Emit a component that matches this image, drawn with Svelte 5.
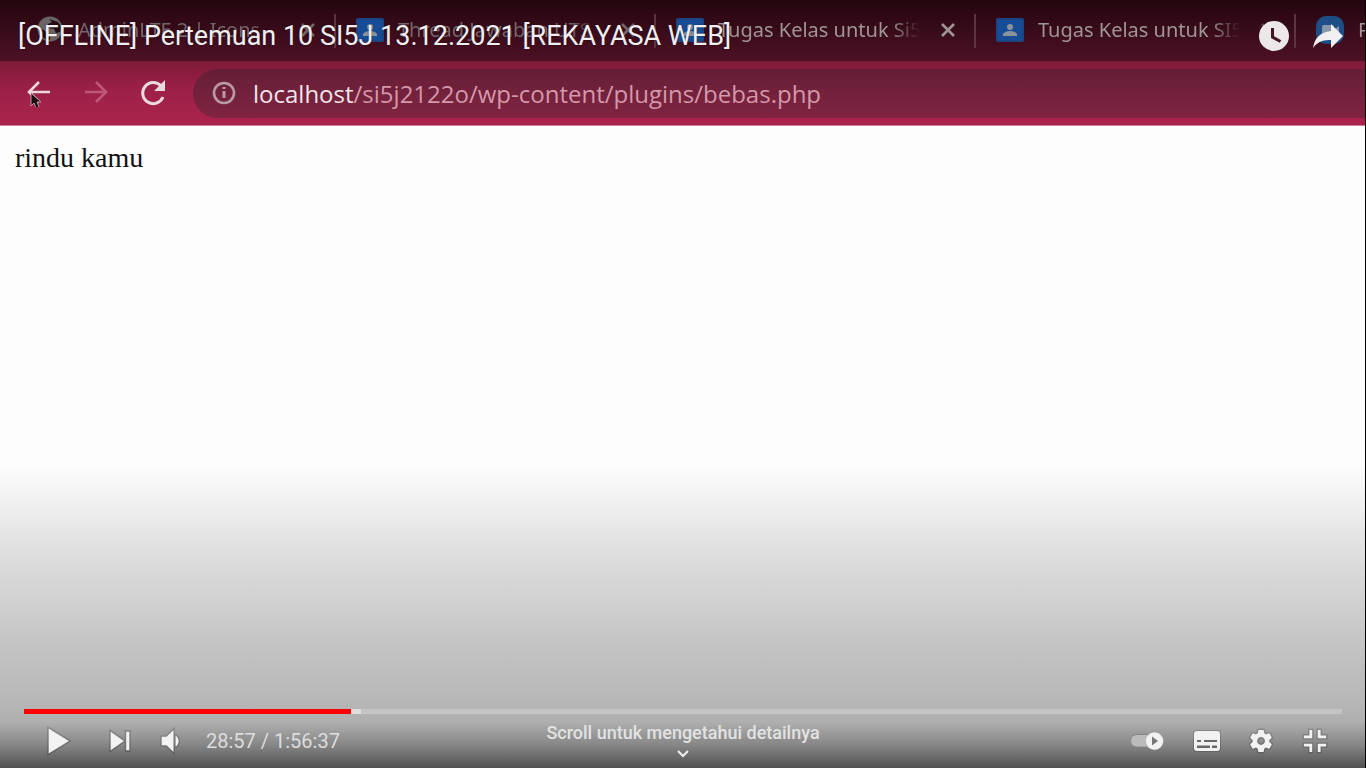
<script>
  const tabs = [
    { title: 'AdminLTE 2 | Icons', icon: 'globe', dim: true },
    { title: 'Thread Jawaban UTS |', icon: 'class', dim: true },
    { title: 'Tugas Kelas untuk Si5', icon: 'class', dim: false },
    { title: 'Tugas Kelas untuk SI5', icon: 'class', dim: false, faintClose: true },
    { title: 'P', icon: 'meet', dim: false }
  ];
  const played = 24.8;
  const loaded = 25.6;
</script>

<main class="player">
  <section class="video" aria-label="Video">
    <div class="tabs">
      {#each tabs as tab}
        <div class="tab" class:dim={tab.dim}>
          <svg class="favicon" width="28" height="28" viewBox="0 0 28 28" aria-hidden="true">
            {#if tab.icon === 'globe'}
              <circle cx="14" cy="13" r="12.5" fill="#6b6466" />
              <path d="M3 13q6 0 7 4l4 2v5Q4 23 3 13zM13 3l9 3q4 5 2 10l-4 1-2-4-6-1v-4l4-2z" fill="#240c13" />
            {:else if tab.icon === 'class'}
              <rect y="2" width="28" height="24" rx="2" fill="#1c4583" />
              <rect x="2" y="4" width="24" height="20" fill="#174c96" />
              <circle cx="14" cy="11" r="3" fill="#8c9398" />
              <path d="M7 20v-2q2-3 7-3t7 3v2z" fill="#8c9398" />
            {:else}
              <rect width="28" height="28" rx="10" fill="#1d4f86" />
              <rect x="6" y="9" width="12" height="10" rx="2" fill="#8797a8" />
              <path d="M19 13l4-3v8l-4-3z" fill="#8797a8" />
            {/if}
          </svg>
          <span class="tab-title">{tab.title}</span>
          <svg class="close" class:faint={tab.faintClose} width="16" height="16" viewBox="0 0 16 16" aria-hidden="true">
            <path d="M2 2l12 12M14 2L2 14" stroke="currentColor" stroke-width="2.6" />
          </svg>
        </div>
      {/each}
    </div>
    <div class="toolbar">
      <div class="nav">
        <svg width="28" height="28" viewBox="0 0 28 28" fill="none" stroke="#ead9df" stroke-width="2.6" aria-hidden="true">
          <path d="M25 13H4M14 3L4 13l10 10" />
          <path d="M6 14v13l3-3 2 5 3-1-2-5h4z" fill="#180d12" stroke="#b897a5" stroke-width="1" />
        </svg>
        <svg width="28" height="28" viewBox="0 0 28 28" fill="none" stroke="#bd5878" stroke-width="2.6" aria-hidden="true">
          <path d="M3 13h21M14 3l10 10-10 10" />
        </svg>
        <svg width="28" height="28" viewBox="0 0 28 28" aria-hidden="true">
          <path d="M22 7A10.5 10.5 0 1 0 24 18" fill="none" stroke="#ead9df" stroke-width="3" />
          <path d="M26 1v11H15z" fill="#ead9df" />
        </svg>
      </div>
      <div class="address">
        <svg width="24" height="24" viewBox="0 0 24 24" fill="none" stroke="#b99ba6" aria-hidden="true">
          <circle cx="12" cy="12" r="10" stroke-width="2.6" />
          <path d="M12 10v7M12 6v2" stroke-width="3" />
        </svg>
        <span class="url"><b>localhost</b>/si5j2122o/wp-content/plugins/bebas.php</span>
      </div>
    </div>
    <p class="page">rindu kamu</p>
  </section>

  <div class="overlay">
    <header>
      <h1>[OFFLINE] Pertemuan 10 SI5J 13.12.2021 [REKAYASA WEB]</h1>
      <div class="actions">
        <button aria-label="Tonton nanti">
          <svg width="32" height="32" viewBox="0 0 32 32">
            <circle cx="16" cy="16" r="15" fill="#ece7e9" />
            <path d="M14.5 8v9l8 4.5" fill="none" stroke="#451522" stroke-width="3" />
          </svg>
        </button>
        <button aria-label="Bagikan">
          <svg width="32" height="32" viewBox="0 0 32 32">
            <path d="M19 4l12 12-12 12v-8Q7 19 1 28 3 13 19 11z" fill="#f1eff1" />
          </svg>
        </button>
      </div>
    </header>

    <footer>
      <div class="progress" role="progressbar" aria-label="Posisi video" aria-valuenow={played}>
        <div class="loaded" style="width: {loaded}%"></div>
        <div class="played" style="width: {played}%"></div>
      </div>
      <div class="controls">
        <div class="left">
          <button class="cell" aria-label="Putar">
            <svg class="glyph" width="56" height="56" viewBox="0 0 36 36"><path d="M12 10v16l13-8z" /></svg>
          </button>
          <button class="cell" aria-label="Berikutnya">
            <svg class="glyph" width="56" height="56" viewBox="0 0 36 36"><path d="M12 24l8.500-6L12 12zM22 12v12h2V12z" /></svg>
          </button>
          <button class="cell volume" aria-label="Volume">
            <svg class="glyph" width="50" height="50" viewBox="0 0 36 36"><path d="M12 21h3.500l5 5v-16l-5 5H12zM22 14v8c1.300-.7 2.200-2.200 2.200-4s-.9-3.300-2.200-4z" /></svg>
          </button>
          <span class="time">28:57 / 1:56:37</span>
        </div>
        <button class="details">
          <span>Scroll untuk mengetahui detailnya</span>
          <svg width="14" height="10" viewBox="0 0 14 10" aria-hidden="true"><path d="M2 2l5 5 5-5" fill="none" stroke="#eee" stroke-width="2.200" /></svg>
        </button>
        <div class="right">
          <button class="cell autoplay" aria-label="Putar otomatis">
            <svg width="66" height="54" viewBox="0 0 66 54">
              <rect x="16.500" y="20.500" width="30" height="12.500" rx="6.250" fill="#bbb" stroke="#858585" />
              <circle cx="40.500" cy="27" r="9" fill="#f2f2f2" stroke="#777" stroke-opacity=".3" />
              <path d="M38 22.500v9l6-4.500z" fill="#777" />
            </svg>
          </button>
          <button class="cell" aria-label="Teks">
            <svg width="54" height="54" viewBox="0 0 54 54">
              <rect class="box" x="14" y="17" width="26" height="20" rx="3" />
              <path d="M17 26h4v2h-4zM24 26h13v2H24zM17 31.500h13v2.500H17zM32 31.500h5v2.500h-5z" fill="#686868" />
            </svg>
          </button>
          <button class="cell" aria-label="Setelan">
            <svg class="glyph" width="50" height="50" viewBox="0 0 36 36"><path d="m 23.94,18.78 c .03,-0.25 .05,-0.51 .05,-0.78 0,-0.27 -0.02,-0.52 -0.05,-0.78 l 1.68,-1.32 c .15,-0.12 .19,-0.33 .09,-0.51 l -1.6,-2.76 c -0.09,-0.17 -0.31,-0.24 -0.48,-0.17 l -1.99,.8 c -0.41,-0.32 -0.86,-0.58 -1.35,-0.78 l -0.30,-2.12 c -0.02,-0.19 -0.19,-0.33 -0.39,-0.33 l -3.2,0 c -0.2,0 -0.36,.14 -0.39,.33 l -0.30,2.12 c -0.48,.2 -0.93,.47 -1.35,.78 l -1.99,-0.8 c -0.18,-0.07 -0.39,0 -0.48,.17 l -1.6,2.76 c -0.10,.17 -0.05,.39 .09,.51 l 1.68,1.32 c -0.03,.25 -0.05,.52 -0.05,.78 0,.26 .02,.52 .05,.78 l -1.68,1.32 c -0.15,.12 -0.19,.33 -0.09,.51 l 1.6,2.76 c .09,.17 .31,.24 .48,.17 l 1.99,-0.8 c .41,.32 .86,.58 1.35,.78 l .30,2.12 c .02,.19 .19,.33 .39,.33 l 3.2,0 c .2,0 .36,-0.14 .39,-0.33 l .30,-2.12 c .48,-0.2 .93,-0.47 1.35,-0.78 l 1.99,.8 c .18,.07 .39,0 .48,-0.17 l 1.6,-2.76 c .09,-0.17 .05,-0.39 -0.09,-0.51 l -1.68,-1.32 z m -5.94,2.01 c -1.54,0 -2.8,-1.25 -2.8,-2.8 0,-1.54 1.25,-2.8 2.8,-2.8 1.54,0 2.8,1.25 2.8,2.8 0,1.54 -1.25,2.8 -2.8,2.8 z" /></svg>
          </button>
          <button class="cell" aria-label="Keluar dari layar penuh">
            <svg class="glyph" width="50" height="50" viewBox="0 0 36 36"><path d="M14 14h-4v2h6v-6h-2zM22 14v-4h-2v6h6v-2zM20 26h2v-4h4v-2h-6zM10 22h4v4h2v-6h-6z" /></svg>
          </button>
        </div>
      </div>
    </footer>
  </div>
</main>

<style>
  :global(body) {
    margin: 0;
    background: #000;
  }
  .player {
    position: relative;
    min-height: 100vh;
    overflow: hidden;
    font-family: Roboto, sans-serif;
  }
  .video {
    min-height: 100vh;
    margin-right: 1px;
    background: #fdfdfd;
    overflow: hidden;
  }
  .tabs {
    display: flex;
    height: 61px;
    padding-left: 16px;
    background: linear-gradient(#24060f, #4d1125);
    overflow: hidden;
  }
  .tab {
    display: flex;
    align-items: center;
    flex: 0 0 320px;
    min-width: 0;
    box-sizing: border-box;
    padding: 0 20px 2px;
    color: #9f9595;
    font: 20px "Noto Sans", sans-serif;
    background: linear-gradient(#5c3541, #5c3541) right center / 2px 34px no-repeat;
  }
  .dim {
    color: #74656a;
  }
  .favicon {
    flex: none;
    margin-right: 14px;
  }
  .tab-title {
    flex: 1;
    min-width: 0;
    overflow: hidden;
    white-space: nowrap;
    mask-image: linear-gradient(90deg, #000 85%, transparent);
  }
  .close {
    flex: none;
    margin-left: 20px;
  }
  .faint {
    opacity: 0.4;
  }
  .toolbar {
    display: flex;
    align-items: center;
    gap: 26px;
    height: 64px;
    padding-left: 25px;
    background: linear-gradient(#7f1b39, #9c2047 45%, #ab244d);
    border-bottom: 1px solid #cf819b;
  }
  .nav {
    display: flex;
    gap: 29px;
  }
  .address {
    display: flex;
    align-items: center;
    flex: 1;
    gap: 17px;
    height: 49px;
    padding-left: 19px;
    border-radius: 25px 0 0 25px;
    background: linear-gradient(#651e36, #802442);
  }
  .url {
    color: #d597aa;
    font: 24px "Open Sans", sans-serif;
    white-space: nowrap;
  }
  .url b {
    color: #f2e5ea;
    font-weight: 400;
  }
  .page {
    margin: 0;
    padding: 16px 15px;
    color: #111;
    font: 28px/32px "Liberation Serif", serif;
  }
  .overlay {
    position: absolute;
    inset: 0;
    display: flex;
    flex-direction: column;
    justify-content: space-between;
  }
  header {
    display: flex;
    align-items: center;
    justify-content: space-between;
    height: 72px;
    padding: 0 22px 0 18px;
  }
  h1 {
    margin: 0;
    color: #f0eef0;
    font-size: 27px;
    font-weight: 400;
    line-height: 32px;
    text-shadow: 0 0 2px rgba(0, 0, 0, 0.5);
  }
  .actions {
    display: flex;
    gap: 22px;
  }
  button {
    display: flex;
    align-items: center;
    justify-content: center;
    padding: 0;
    border: 0;
    background: none;
    font-family: inherit;
    cursor: pointer;
  }
  footer {
    display: flex;
    flex-direction: column;
    justify-content: flex-end;
    height: 328px;
    background: linear-gradient(
      transparent 7%,
      rgba(0, 0, 0, 0.02) 12%,
      rgba(0, 0, 0, 0.1) 30%,
      rgba(0, 0, 0, 0.22) 60%,
      rgba(0, 0, 0, 0.28) 80%,
      rgba(0, 0, 0, 0.31) 86%,
      rgba(0, 0, 0, 0.47) 93%,
      rgba(0, 0, 0, 0.68) 100%
    );
  }
  .progress {
    display: grid;
    height: 5px;
    margin: 0 24px;
    background: #c4c4c4;
  }
  .loaded,
  .played {
    grid-area: 1 / 1;
  }
  .loaded {
    background: #dedede;
  }
  .played {
    background: #f00;
  }
  .controls {
    display: grid;
    grid-template-columns: 1fr auto 1fr;
    height: 54px;
    padding: 0 24px;
  }
  .left,
  .right {
    display: flex;
    align-items: center;
  }
  .left {
    padding-left: 7px;
  }
  .right {
    justify-content: flex-end;
  }
  .cell {
    width: 54px;
    height: 54px;
  }
  .cell svg {
    flex: none;
  }
  .left .cell + .cell {
    margin-left: 8px;
  }
  .left .cell.volume {
    width: 46px;
    margin-left: 0;
  }
  .autoplay {
    width: 66px;
  }
  .glyph path,
  .box {
    fill: #f2f2f2;
    stroke: #000;
    stroke-opacity: 0.16;
    stroke-width: 2px;
    paint-order: stroke;
  }
  .time {
    margin-left: 13px;
    color: #ddd;
    font-size: 20px;
    white-space: nowrap;
  }
  .details {
    flex-direction: column;
    justify-content: flex-start;
    gap: 4px;
    padding-top: 7px;
    color: #e2e2e2;
    font-size: 18px;
    font-weight: 500;
    line-height: 24px;
    white-space: nowrap;
  }
</style>
